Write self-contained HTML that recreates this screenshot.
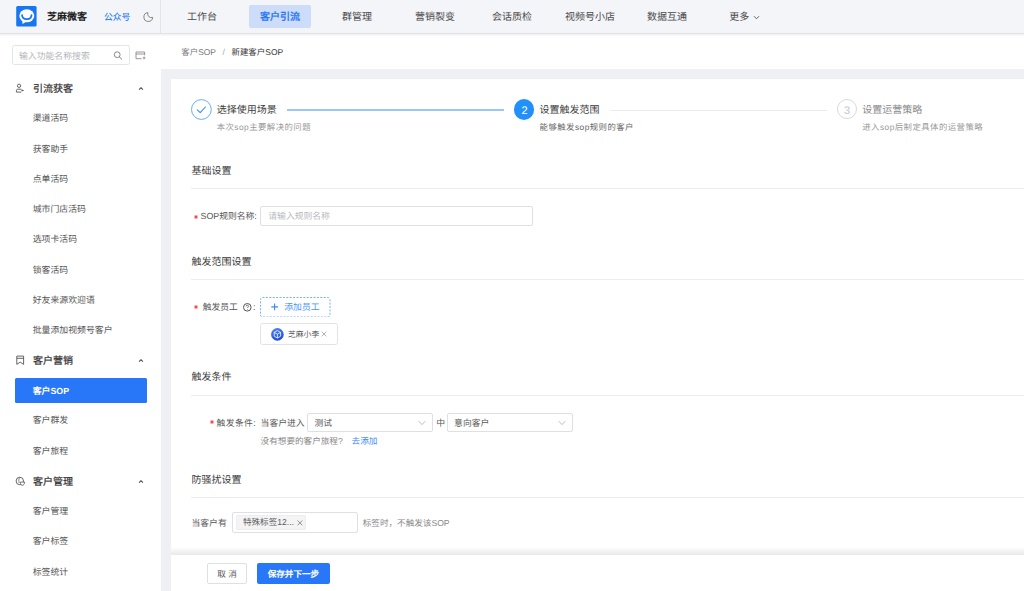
<!DOCTYPE html>
<html lang="zh-CN"><head><meta charset="utf-8">
<style>
*{box-sizing:border-box;margin:0;padding:0}
html,body{width:1024px;height:591px;overflow:hidden;background:#fff;text-rendering:geometricPrecision;font-family:"Liberation Sans",sans-serif;color:#333}
.a{position:absolute;white-space:nowrap}
.t{position:absolute;white-space:nowrap;line-height:1}
#hdr{position:absolute;left:0;top:0;width:1024px;height:33px;background:#f4f5f9;}
.nav{position:absolute;top:13px;font-size:10px;line-height:10px;color:#4a4a4a;text-align:center;width:78px}
#side{position:absolute;left:0;top:33px;width:161px;height:558px;background:#fff}
.sec{position:absolute;left:33px;font-size:10px;line-height:10px;color:#333;-webkit-text-stroke:0.22px #333}
.item{position:absolute;left:32.7px;font-size:8.9px;line-height:9px;color:#555}
#gray{position:absolute;left:161px;top:69px;width:863px;height:522px;background:#eff0f4}
#card{position:absolute;left:171px;top:79px;width:853px;height:512px;background:#fff}
.stt{position:absolute;font-size:10px;line-height:10px;color:#3d3d3d;top:106px}
.sts{position:absolute;font-size:8.4px;line-height:9px;color:#999;letter-spacing:0.45px}
.h{position:absolute;left:191.5px;font-size:10px;line-height:10px;color:#3a3a3a}
.dv{position:absolute;left:191px;width:833px;height:1px;background:#ebedf2}
.lbl{position:absolute;font-size:8.8px;line-height:9px;color:#555}
.star{position:absolute;font-size:9px;line-height:9px;color:#e8363a;margin-top:1px}
</style></head><body>

<div id="hdr"></div>
<div class="a" style="left:160px;top:0;width:1px;height:33px;background:#e3e4e8"></div>
<!-- logo -->
<svg class="a" style="left:16px;top:6px" width="21" height="21" viewBox="0 0 21 21">
<rect x="0.2" y="0" width="20.4" height="20.6" rx="1.5" fill="#1677f0"/>
<ellipse cx="10.8" cy="9.8" rx="7.5" ry="6.5" fill="#fff"/>
<path d="M6.2 13.5L6.5 18L11 15.2z" fill="#fff"/>
<path d="M6.1 9.2C6.3 14.4 15.3 14.4 15.5 9.2" fill="none" stroke="#1677f0" stroke-width="1.8" stroke-linecap="round"/>
</svg>
<div class="t" style="left:47px;top:13px;font-size:10px;font-weight:bold;color:#1f1f1f">芝麻微客</div>
<div class="t" style="left:104px;top:13px;font-size:8.8px;color:#2479f7;-webkit-text-stroke:0.1px #2479f7">公众号</div>
<svg class="a" style="left:142.8px;top:12px" width="11" height="11" viewBox="0 0 11 11">
<path d="M4.98 0.62A4.4 4.4 0 1 0 9.68 5.32A3.6 3.6 0 0 1 4.98 0.62Z" fill="none" stroke="#7a7a7a" stroke-width="0.9" stroke-linejoin="round"/>
</svg>

<div class="a" style="left:249px;top:5px;width:62px;height:22.5px;background:#cddcf8;border-radius:2px"></div>
<div class="nav" style="left:163px">工作台</div>
<div class="nav" style="left:241px;color:#2474f7;-webkit-text-stroke:0.35px #2474f7">客户引流</div>
<div class="nav" style="left:318px">群管理</div>
<div class="nav" style="left:396px">营销裂变</div>
<div class="nav" style="left:473px">会话质检</div>
<div class="nav" style="left:551px">视频号小店</div>
<div class="nav" style="left:628px">数据互通</div>
<div class="t" style="left:729.3px;top:13px;font-size:10px;color:#4a4a4a">更多</div>
<svg class="a" style="left:752.5px;top:14.5px" width="7" height="5" viewBox="0 0 7 5"><path d="M1 1.2L3.5 3.8L6 1.2" fill="none" stroke="#555" stroke-width="0.9"/></svg>

<!-- sidebar -->
<div id="side"></div>
<div class="a" style="left:11.5px;top:45px;width:118px;height:19.5px;border:1px solid #e3e4e6;border-radius:2.5px"></div>
<div class="t" style="left:19px;top:51.5px;font-size:8.85px;color:#b4b6ba">输入功能名称搜索</div>

<div id="gray"></div>
<div id="card"></div>

<!-- sidebar content -->
<svg class="a" style="left:113px;top:50.6px" width="10" height="9" viewBox="0 0 10 9">
<circle cx="4.2" cy="3.7" r="2.9" fill="none" stroke="#777" stroke-width="0.85"/>
<path d="M6.4 5.9L8.8 8.2" stroke="#777" stroke-width="0.95" stroke-linecap="round"/>
</svg>
<svg class="a" style="left:134.6px;top:50.6px" width="12" height="10" viewBox="0 0 12 10">
<path d="M6.6 7.7H1V1H9.6V4.3" fill="none" stroke="#888" stroke-width="0.85"/>
<path d="M1 3H9.6" stroke="#888" stroke-width="0.85"/>
<path d="M7.7 6.9H10.5M9.1 5.5V8.3" stroke="#888" stroke-width="0.85"/>
</svg>

<!-- sections -->
<svg class="a" style="left:15px;top:83px" width="10" height="10" viewBox="0 0 10 10">
<circle cx="4.05" cy="2.8" r="1.65" fill="none" stroke="#555" stroke-width="0.9"/>
<path d="M6.2 6.2H2.6C1.9 6.2 1.45 6.7 1.45 7.4V9.1H6.2" fill="none" stroke="#555" stroke-width="0.9"/>
<path d="M6.5 6.3L9.2 7.4L6.5 8.5Z" fill="#555"/>
</svg>
<div class="sec" style="top:84.5px">引流获客</div>
<svg class="a" style="left:138px;top:86px" width="6" height="5" viewBox="0 0 6 5"><path d="M1.1 3.7L3 1.7L4.9 3.7" fill="none" stroke="#444" stroke-width="1.05"/></svg>

<div class="item" style="top:114px">渠道活码</div>
<div class="item" style="top:144.5px">获客助手</div>
<div class="item" style="top:174.5px">点单活码</div>
<div class="item" style="top:205px">城市门店活码</div>
<div class="item" style="top:235px">选项卡活码</div>
<div class="item" style="top:265.5px">锁客活码</div>
<div class="item" style="top:295.5px">好友来源欢迎语</div>
<div class="item" style="top:326px">批量添加视频号客户</div>

<svg class="a" style="left:15px;top:355px" width="10" height="10" viewBox="0 0 10 10">
<path d="M1.8 9.4V1.1H8.6V9.4L5.2 7.1Z" fill="none" stroke="#555" stroke-width="0.9" stroke-linejoin="round"/>
<path d="M1.8 3.3H8.6" stroke="#555" stroke-width="0.9"/>
</svg>
<div class="sec" style="top:356.5px">客户营销</div>
<svg class="a" style="left:138px;top:358px" width="6" height="5" viewBox="0 0 6 5"><path d="M1.1 3.7L3 1.7L4.9 3.7" fill="none" stroke="#444" stroke-width="1.05"/></svg>

<div class="a" style="left:15px;top:378px;width:132px;height:25px;background:#2877f8;border-radius:1.5px"></div>
<div class="item" style="top:387px;color:#fff;font-weight:bold">客户SOP</div>
<div class="item" style="top:416px">客户群发</div>
<div class="item" style="top:446.5px">客户旅程</div>

<svg class="a" style="left:15px;top:476px" width="10" height="10" viewBox="0 0 10 10">
<circle cx="4.8" cy="5" r="3.7" fill="none" stroke="#555" stroke-width="0.9"/>
<path d="M4.6 1.6C3.6 3 3.6 5.5 4.3 7" fill="none" stroke="#555" stroke-width="0.7"/>
<path d="M5.3 6.1H9.6C9.5 8.3 8.5 9.3 7.45 9.3C6.4 9.3 5.4 8.3 5.3 6.1Z" fill="#fff" stroke="#555" stroke-width="0.8"/>
</svg>
<div class="sec" style="top:477.5px">客户管理</div>
<svg class="a" style="left:138px;top:479px" width="6" height="5" viewBox="0 0 6 5"><path d="M1.1 3.7L3 1.7L4.9 3.7" fill="none" stroke="#444" stroke-width="1.05"/></svg>
<div class="item" style="top:507px">客户管理</div>
<div class="item" style="top:537px">客户标签</div>
<div class="item" style="top:567.5px">标签统计</div>

<!-- steps -->
<svg class="a" style="left:191px;top:99px" width="21" height="21" viewBox="0 0 21 21">
<circle cx="10.4" cy="10.5" r="9.9" fill="#fff" stroke="#5ea6fa" stroke-width="0.95"/>
<path d="M6.3 10.9L9.2 13.7L14.4 8" fill="none" stroke="#3a8af7" stroke-width="1.1" stroke-linecap="round" stroke-linejoin="round"/>
</svg>
<div class="stt" style="left:216.7px">选择使用场景</div>
<div class="sts" style="left:216.7px;top:123px">本次sop主要解决的问题</div>
<div class="a" style="left:287px;top:109.2px;width:217px;height:1.4px;background:#98c8fb"></div>

<div class="a" style="left:514.2px;top:99.4px;width:20.2px;height:20.2px;border-radius:50%;background:#2190f9"></div>
<div class="t" style="left:514.4px;top:105.8px;width:20.2px;text-align:center;font-size:11px;color:#fff">2</div>
<div class="stt" style="left:539.6px">设置触发范围</div>
<div class="sts" style="left:539.6px;top:122.5px;color:#666">能够触发sop规则的客户</div>
<div class="a" style="left:610px;top:109.5px;width:217px;height:1px;background:#ebecef"></div>

<div class="a" style="left:836.8px;top:99.2px;width:20.2px;height:20.2px;border-radius:50%;border:1px solid #d9d9db"></div>
<div class="t" style="left:837px;top:106px;width:20.2px;text-align:center;font-size:11px;color:#c6c6c6">3</div>
<div class="stt" style="left:862.3px;color:#8a8a8a">设置运营策略</div>
<div class="sts" style="left:862.3px;top:122.5px">进入sop后制定具体的运营策略</div>

<!-- section 1 -->
<div class="h" style="top:166.5px">基础设置</div>
<div class="dv" style="top:188px"></div>
<svg class="a" style="left:193.6px;top:214.6px" width="4" height="4" viewBox="0 0 4 4"><path d="M2 0.1V3.9M0.3 1L3.7 3M3.7 1L0.3 3" stroke="#f0353b" stroke-width="0.95"/></svg>
<div class="lbl" style="left:200.6px;top:211.5px">SOP规则名称:</div>
<div class="a" style="left:260px;top:206.4px;width:272.6px;height:19.3px;border:1px solid #dfe0e3;border-radius:2px"></div>
<div class="t" style="left:268.3px;top:212px;font-size:8.8px;color:#b8babe">请输入规则名称</div>

<!-- section 2 -->
<div class="h" style="top:258px">触发范围设置</div>
<div class="dv" style="top:279px"></div>
<svg class="a" style="left:193.6px;top:305px" width="4" height="4" viewBox="0 0 4 4"><path d="M2 0.1V3.9M0.3 1L3.7 3M3.7 1L0.3 3" stroke="#f0353b" stroke-width="0.95"/></svg>
<div class="lbl" style="left:202.7px;top:302.5px">触发员工</div>
<svg class="a" style="left:243px;top:302.5px" width="9" height="9" viewBox="0 0 9 9">
<circle cx="4.3" cy="4.3" r="3.8" fill="none" stroke="#444" stroke-width="0.9"/>
<path d="M3.1 3.4C3.1 2.6 3.6 2.2 4.3 2.2C5 2.2 5.5 2.6 5.5 3.3C5.5 4.1 4.4 4.2 4.4 5.1" fill="none" stroke="#555" stroke-width="0.8"/>
<circle cx="4.4" cy="6.4" r="0.45" fill="#555"/>
</svg>
<div class="lbl" style="left:253px;top:302.5px">:</div>
<svg class="a" style="left:260px;top:296.8px" width="70.5" height="20.5" viewBox="0 0 70.5 20.5"><rect x="0.5" y="0.5" width="69.5" height="19.5" rx="2" fill="none" stroke="#6aa8f8" stroke-width="0.9" stroke-dasharray="2 1.4"/></svg>
<svg class="a" style="left:271px;top:302.5px" width="8" height="8" viewBox="0 0 8 8"><path d="M3.6 0.5V7.2M0.3 3.9H7" stroke="#3a8af7" stroke-width="1.1"/></svg>
<div class="t" style="left:284.3px;top:302.5px;font-size:8.8px;color:#4b95f8">添加员工</div>
<div class="a" style="left:260.4px;top:323.2px;width:78px;height:21.4px;border:1px solid #e2e3e6;border-radius:2.5px"></div>
<svg class="a" style="left:270.5px;top:328px" width="13" height="13" viewBox="0 0 13 13">
<defs><linearGradient id="av" x1="0" y1="0" x2="0.3" y2="1"><stop offset="0" stop-color="#4d86f7"/><stop offset="1" stop-color="#1f4fdc"/></linearGradient></defs><circle cx="6.4" cy="6.4" r="6.3" fill="url(#av)"/>
<path d="M6.4 2.6L9.6 4.4V8.2L6.4 10L3.2 8.2V4.4Z" fill="none" stroke="#fff" stroke-width="0.8" stroke-linejoin="round"/>
<path d="M3.2 4.4L6.4 6.2L9.6 4.4M6.4 6.2V10" fill="none" stroke="#fff" stroke-width="0.8"/>
</svg>
<div class="t" style="left:288px;top:330.8px;font-size:7.8px;color:#555">芝麻小李</div>
<svg class="a" style="left:320.8px;top:331px" width="6" height="6" viewBox="0 0 6 6"><path d="M0.7 0.7L5.3 5.3M5.3 0.7L0.7 5.3" stroke="#999" stroke-width="0.75"/></svg>

<!-- section 3 -->
<div class="h" style="top:372.5px">触发条件</div>
<div class="dv" style="top:394.5px"></div>
<svg class="a" style="left:210.3px;top:419.8px" width="4" height="4" viewBox="0 0 4 4"><path d="M2 0.1V3.9M0.3 1L3.7 3M3.7 1L0.3 3" stroke="#f0353b" stroke-width="0.95"/></svg>
<div class="lbl" style="left:216.5px;top:418.5px;letter-spacing:0.4px">触发条件:</div>
<div class="lbl" style="left:260.6px;top:418.5px">当客户进入</div>
<div class="a" style="left:307.3px;top:412.6px;width:125.6px;height:19.8px;border:1px solid #dfe0e3;border-radius:2px"></div>
<div class="t" style="left:314.4px;top:418.5px;font-size:8.8px;color:#555">测试</div>
<svg class="a" style="left:417.5px;top:419.5px" width="8" height="6" viewBox="0 0 8 6"><path d="M0.8 1.2L4 4.6L7.2 1.2" fill="none" stroke="#aaa" stroke-width="0.8"/></svg>
<div class="lbl" style="left:436.3px;top:418.5px">中</div>
<div class="a" style="left:447.2px;top:412.8px;width:125.7px;height:19.6px;border:1px solid #dfe0e3;border-radius:2px"></div>
<div class="t" style="left:454.1px;top:418.5px;font-size:8.8px;color:#555">意向客户</div>
<svg class="a" style="left:557.5px;top:419.5px" width="8" height="6" viewBox="0 0 8 6"><path d="M0.8 1.2L4 4.6L7.2 1.2" fill="none" stroke="#aaa" stroke-width="0.8"/></svg>
<div class="t" style="left:260.6px;top:437px;font-size:8.6px;color:#888">没有想要的客户旅程?</div>
<div class="t" style="left:351.6px;top:437px;font-size:8.6px;color:#3d8af7">去添加</div>

<!-- section 4 -->
<div class="h" style="top:476px">防骚扰设置</div>
<div class="dv" style="top:496.5px"></div>
<div class="lbl" style="left:191.5px;top:518.5px">当客户有</div>
<div class="a" style="left:232px;top:512px;width:125.7px;height:20.5px;border:1px solid #dfe0e3;border-radius:2px"></div>
<div class="a" style="left:236px;top:514.7px;width:69.8px;height:15px;background:#f4f4f5;border:1px solid #ededef;border-radius:2px"></div>
<div class="t" style="left:242.9px;top:518px;font-size:8.6px;color:#5c5c5c">特殊标签12...</div>
<svg class="a" style="left:296.6px;top:519.9px" width="6" height="6" viewBox="0 0 6 6"><path d="M0.5 0.5L5.3 5.3M5.3 0.5L0.5 5.3" stroke="#777" stroke-width="0.8"/></svg>
<div class="t" style="left:362.7px;top:518.5px;font-size:8.6px;color:#888">标签时，不触发该SOP</div>

<!-- footer -->
<div class="a" style="left:171px;top:547px;width:853px;height:8.5px;background:linear-gradient(rgba(255,255,255,0),#e6e6e9)"></div>
<div class="a" style="left:171px;top:555.3px;width:853px;height:36px;background:#fff"></div>
<div class="a" style="left:206.8px;top:563.4px;width:40.2px;height:20.2px;border:1px solid #dfe0e3;border-radius:2px"></div>
<div class="t" style="left:207px;top:569.7px;width:40.2px;text-align:center;font-size:8.6px;color:#555">取 消</div>
<div class="a" style="left:257.1px;top:563.4px;width:72.7px;height:20.2px;background:#2877f8;border-radius:2px"></div>
<div class="t" style="left:257.1px;top:569.7px;width:72.7px;text-align:center;font-size:8.6px;color:#fff;-webkit-text-stroke:0.35px #fff">保存并下一步</div>

<!-- breadcrumb -->
<div class="t" style="left:181.3px;top:47.5px;font-size:8.45px;color:#777">客户SOP</div>
<div class="t" style="left:222.5px;top:47.5px;font-size:8.6px;color:#aaa">/</div>
<div class="t" style="left:231.5px;top:47.5px;font-size:8.45px;color:#333">新建客户SOP</div>


<div class="a" style="left:0;top:32.5px;width:1024px;height:1.5px;background:#e2e2e4"></div>
<div class="a" style="left:0;top:34px;width:1024px;height:3px;background:linear-gradient(rgba(0,0,0,0.055),rgba(0,0,0,0))"></div>
</body></html>
